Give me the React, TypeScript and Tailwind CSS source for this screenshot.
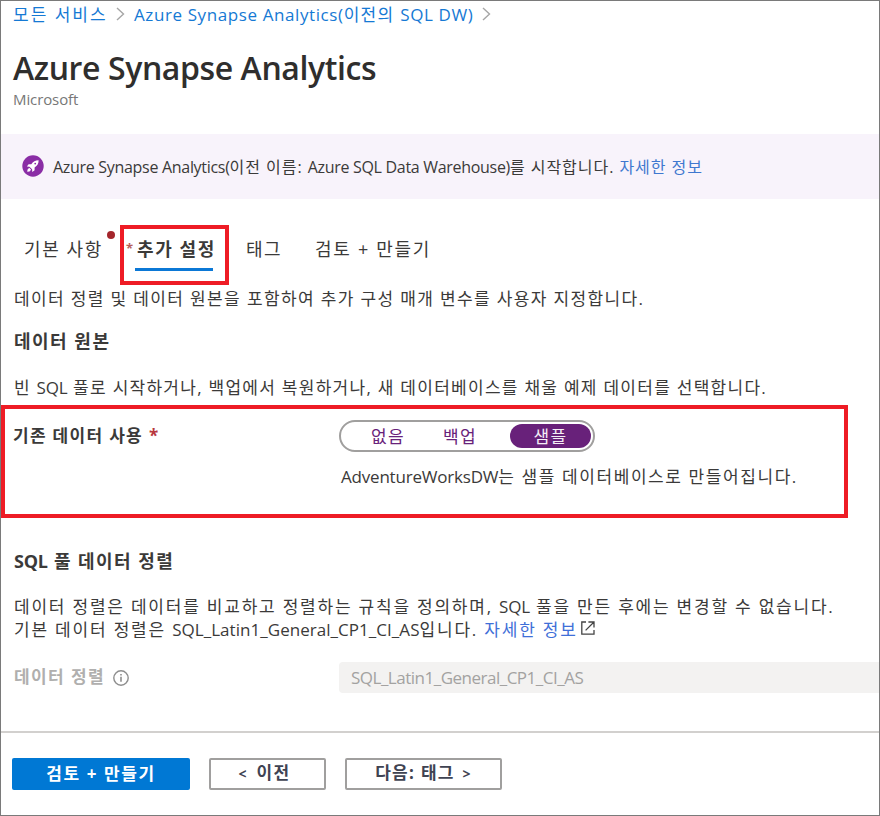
import type { ReactNode } from "react";

function Latin({ children, className = "tracking-[-0.2px]" }: { children: ReactNode; className?: string }) {
  return <span className={className}>{children}</span>;
}

function Chevron() {
  return (
    <svg width="9" height="14" viewBox="0 0 9 14" fill="none" stroke="#a6a6a6" strokeWidth="1.4">
      <path d="M1 1l6.5 6L1 13" />
    </svg>
  );
}

function Rocket() {
  return (
    <svg width="22" height="22" viewBox="0 0 22 22">
      <circle cx="11" cy="11" r="10.7" fill="#8a2da5" />
      <path
        d="M16.6 5.2c-3.2 0-5.6 1.4-7.3 4H6.6L4.9 11.6l2.6.1 2.6 2.6.2 2.7 2.3-1.8v-2.7c2.7-1.8 4.1-4.1 4-7.3z"
        fill="#fff"
      />
      <path d="M7.2 12.8l-1.6 1.8-.4 2.2 2.3-.4 1.6-1.7z" fill="#fff" />
      <circle cx="13.2" cy="8.6" r="0.9" fill="#8a2da5" />
    </svg>
  );
}

function InfoIcon() {
  return (
    <svg width="16" height="16" viewBox="0 0 16 16" fill="none" stroke="#8e8e8e">
      <circle cx="8" cy="8" r="7.2" strokeWidth="1.4" />
      <path d="M8 6.8v5M8 4v1.6" strokeWidth="1.6" />
    </svg>
  );
}

function ExternalIcon() {
  return (
    <svg width="14" height="14" viewBox="0 0 14 14" fill="none" stroke="#444" strokeWidth="1.3">
      <path d="M5 1H.8v12.2H13V9M7.4 1H13v5.6M13 1L4.6 9.4" />
    </svg>
  );
}

export default function App() {
  return (
    <div className="flex h-[816px] w-[880px] flex-col overflow-hidden border border-[#7a7a7a] bg-white font-['Open_Sans','Noto_Sans_CJK_KR',sans-serif] text-[17px] leading-[23px] tracking-[1.3px] whitespace-nowrap text-[#3b3a39]">
      <nav className="flex h-[26px] items-center pl-3 text-[#1579d4]">
        <span className="w-[103px] tracking-[2px]">모든 서비스</span>
        <Chevron />
        <span className="ml-[9px] w-[348px]">
          <Latin className="tracking-[0.6px]">Azure Synapse Analytics(</Latin>이전의 <Latin className="tracking-[0.6px]">SQL DW)</Latin>
        </span>
        <Chevron />
      </nav>

      <header className="h-[107px] pt-[19px] pl-3">
        <h1 className="h-[43px] text-[32px] leading-[44px] font-semibold tracking-[-0.4px] text-[#2f2e2d]">
          Azure Synapse Analytics
        </h1>
        <p className="h-[20px] text-[15px] leading-[20px] tracking-[-0.1px] text-[#777]">Microsoft</p>
      </header>

      <div className="flex h-[65px] items-center bg-[#f8f3fb] pb-[2px] pl-[21px]">
        <Rocket />
        <p className="mt-[3px] ml-[9px] text-[16px] tracking-[0.95px]">
          <Latin className="tracking-[-0.3px]">Azure Synapse Analytics(</Latin>이전 이름: <Latin className="tracking-[-0.3px]">Azure SQL Data Warehouse)</Latin>를 시작합니다.{" "}
          <a className="text-[#3f78cf]">자세한 정보</a>
        </p>
      </div>

      <div className="flex h-[88px] items-start pt-[26px]">
        <span className="mt-[11px] ml-[23px] w-[83px] text-[18px] leading-[26px] tracking-[1.6px]">기본 사항</span>
        <i className="mt-[6px] size-[8px] rounded-full bg-[#a4262c]" />
        <div className="ml-[5px] flex h-[60px] w-[109px] border-4 border-[#ee1c25] pl-[2px]">
          <span className="mt-[8px] w-[9px] text-[13px] font-bold tracking-normal text-[#b8605a]">*</span>
          <div className="h-[42px] w-[78px] border-b-3 border-[#0b78d6] pt-[7px] pl-[2px] text-[18px] leading-[26px] font-bold tracking-[1.6px]">
            추가 설정
          </div>
        </div>
        <span className="mt-[11px] ml-[17px] w-[69px] text-[18px] leading-[26px] tracking-[1.4px]">태그</span>
        <span className="mt-[11px] text-[18px] leading-[26px] tracking-[1.7px]">검토 + 만들기</span>
      </div>

      <section className="h-[118px] pl-[13px]">
        <p className="tracking-[1.36px]">데이터 정렬 및 데이터 원본을 포함하여 추가 구성 매개 변수를 사용자 지정합니다.</p>
        <h2 className="mt-[20px] text-[18px] font-bold tracking-[1.5px]">데이터 원본</h2>
        <p className="mt-[23px] tracking-[1.27px]">
          빈 <Latin>SQL</Latin> 풀로 시작하거나, 백업에서 복원하거나, 새 데이터베이스를 채울 예제 데이터를 선택합니다.
        </p>
      </section>

      <section className="flex h-[113px] w-[847px] border-4 border-[#ee1c25]">
        <h3 className="mt-[15px] ml-[8px] w-[326px] font-bold">
          기존 데이터 사용<span className="ml-[6px] text-[#b8383e]">*</span>
        </h3>
        <div className="pt-[11px]">
          <div className="flex h-[32px] w-[256px] items-center rounded-full border-2 border-[#a09f9e] text-[#68217a]">
            <span className="w-[92px] pl-[30px]">없음</span>
            <span className="w-[77px] pl-[10px]">백업</span>
            <span className="flex h-6 w-[81px] items-center justify-center rounded-full bg-[#68217a] text-[#f4edf6]">샘플</span>
          </div>
          <p className="mt-[13px] ml-[2px] tracking-[1.58px]">
            <Latin>AdventureWorksDW</Latin>는 샘플 데이터베이스로 만들어집니다.
          </p>
        </div>
      </section>

      <section className="h-[213px] pl-[13px]">
        <h2 className="pt-[32px] text-[18px] font-bold tracking-[1.45px]">
          <Latin>SQL</Latin> 풀 데이터 정렬
        </h2>
        <p className="mt-[22px] tracking-[1.78px]">
          데이터 정렬은 데이터를 비교하고 정렬하는 규칙을 정의하며, <Latin>SQL</Latin> 풀을 만든 후에는 변경할 수 없습니다.
        </p>
        <div className="flex items-center">
          <p className="tracking-[1.8px]">
            기본 데이터 정렬은 <Latin className="tracking-[0.04px]">SQL_Latin1_General_CP1_CI_AS</Latin>입니다. <a className="text-[#3f6fd8]">자세한 정보</a>
          </p>
          <span className="mb-[3px] ml-[3px]">
            <ExternalIcon />
          </span>
        </div>
        <div className="mt-[21px] flex h-[31px] items-center">
          <span className="mb-[2px] w-[99px] font-bold tracking-[1.4px] text-[#b0afae]">데이터 정렬</span>
          <span className="w-[226px]">
            <InfoIcon />
          </span>
          <div className="flex h-[31px] grow items-center rounded-l-sm bg-[#f3f2f1] pl-[12px] text-[#a3a2a1]">
            <Latin className="tracking-[-0.5px]">SQL_Latin1_General_CP1_CI_AS</Latin>
          </div>
        </div>
      </section>

      <footer className="flex grow gap-[19px] border-t-2 border-[#d2d0ce] pt-[25px] pl-[11px] text-[#3f4352]">
        <button className="h-[32px] w-[178px] rounded-xs bg-[#0078d4] pb-[2px] font-bold tracking-[1.6px] text-white">검토 + 만들기</button>
        <button className="h-[32px] w-[117px] rounded-xs border-2 border-[#a09f9e] pr-[6px] pb-[2px] font-bold">
          <small className="mr-[3px] text-[14px]">&lt;</small> 이전
        </button>
        <button className="h-[32px] w-[157px] rounded-xs border-2 border-[#a09f9e] pb-[2px] font-bold">
          다음: 태그 <small className="ml-[2px] text-[14px]">&gt;</small>
        </button>
      </footer>
    </div>
  );
}
